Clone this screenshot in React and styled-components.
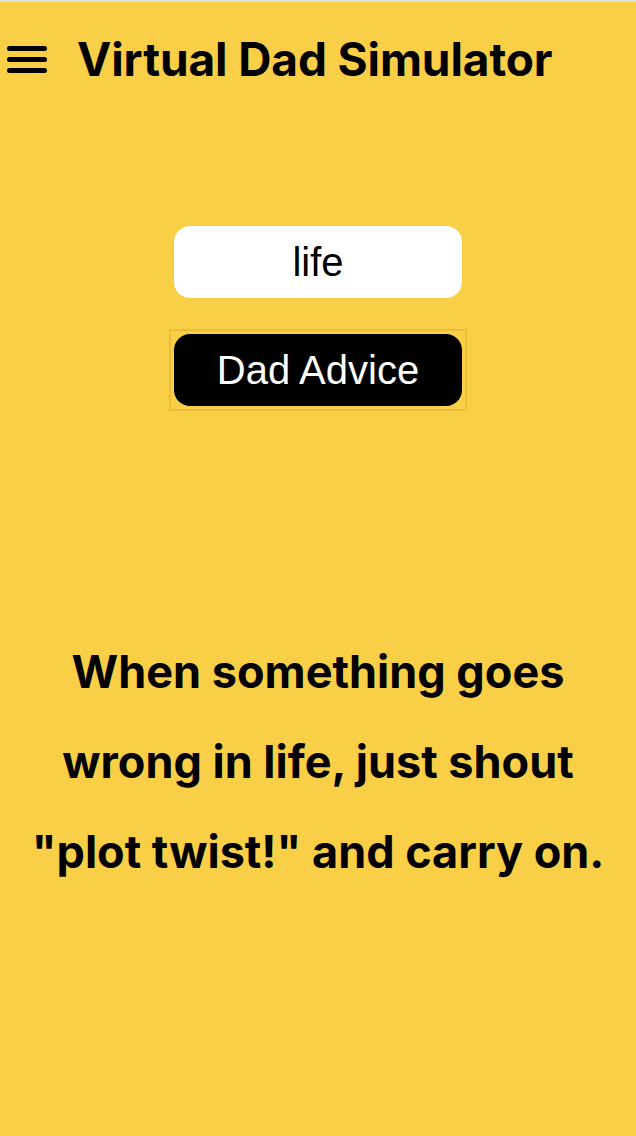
import React, { useState } from 'react'
import styled, { createGlobalStyle } from 'styled-components'

const GlobalStyle = createGlobalStyle`
    html, body {
        margin: 0;
        padding: 0;
        background: #f9cf48;
    }
    * { box-sizing: border-box; }
`

const Page = styled.div`
    min-height: 1136px;
    background: #f9cf48;
    border-top: 2px solid #dedede;
    display: flex;
    flex-direction: column;
`

const Header = styled.header`
    display: flex;
    align-items: center;
    height: 114px;
    padding: 0 0 0 7px;
    gap: 30px;
`

const MenuButton = styled.button`
    background: none;
    border: 0;
    padding: 0;
    width: 40px;
    display: flex;
    flex-direction: column;
    gap: 6px;
    cursor: pointer;
    span {
        display: block;
        height: 5px;
        border-radius: 3px;
        background: #000;
    }
`

const Title = styled.h1`
    margin: 0;
    font-family: Inter, Roboto, "Liberation Sans", sans-serif;
    font-weight: 700;
    font-size: 46px;
    letter-spacing: -0.1px;
    color: #000;
`

const Form = styled.div`
    display: flex;
    flex-direction: column;
    align-items: center;
    gap: 31px;
    margin-top: 110px;
`

const Field = styled.input`
    width: 288px;
    height: 72px;
    border: 0;
    border-radius: 16px;
    background: #fff;
    text-align: center;
    font-family: "Liberation Sans", Arial, sans-serif;
    font-size: 40px;
    color: #000;
    outline: none;
`

const ButtonFrame = styled.div`
    border: 2px solid #ecbc3c;
    padding: 3px;
`

const AdviceButton = styled.button`
    display: block;
    width: 288px;
    height: 72px;
    border: 0;
    border-radius: 16px;
    background: #000;
    color: #fff;
    font-family: "Liberation Sans", Arial, sans-serif;
    font-size: 40px;
    cursor: pointer;
`

const Quote = styled.p`
    margin: 216px 0 0;
    padding: 0 24px;
    text-align: center;
    font-family: Inter, Roboto, "Liberation Sans", sans-serif;
    font-weight: 700;
    font-size: 45px;
    line-height: 90px;
    color: #000;
`

export default function App() {
    const [topic, setTopic] = useState('life')

    return (
        <>
            <GlobalStyle />
            <Page>
                <Header>
                    <MenuButton aria-label="menu">
                        <span /><span /><span />
                    </MenuButton>
                    <Title>Virtual Dad Simulator</Title>
                </Header>
                <Form>
                    <Field value={topic} onChange={e => setTopic(e.target.value)} />
                    <ButtonFrame>
                        <AdviceButton>Dad Advice</AdviceButton>
                    </ButtonFrame>
                </Form>
                <Quote>
                    When something goes wrong in life, just shout "plot twist!" and carry on.
                </Quote>
            </Page>
        </>
    )
}
